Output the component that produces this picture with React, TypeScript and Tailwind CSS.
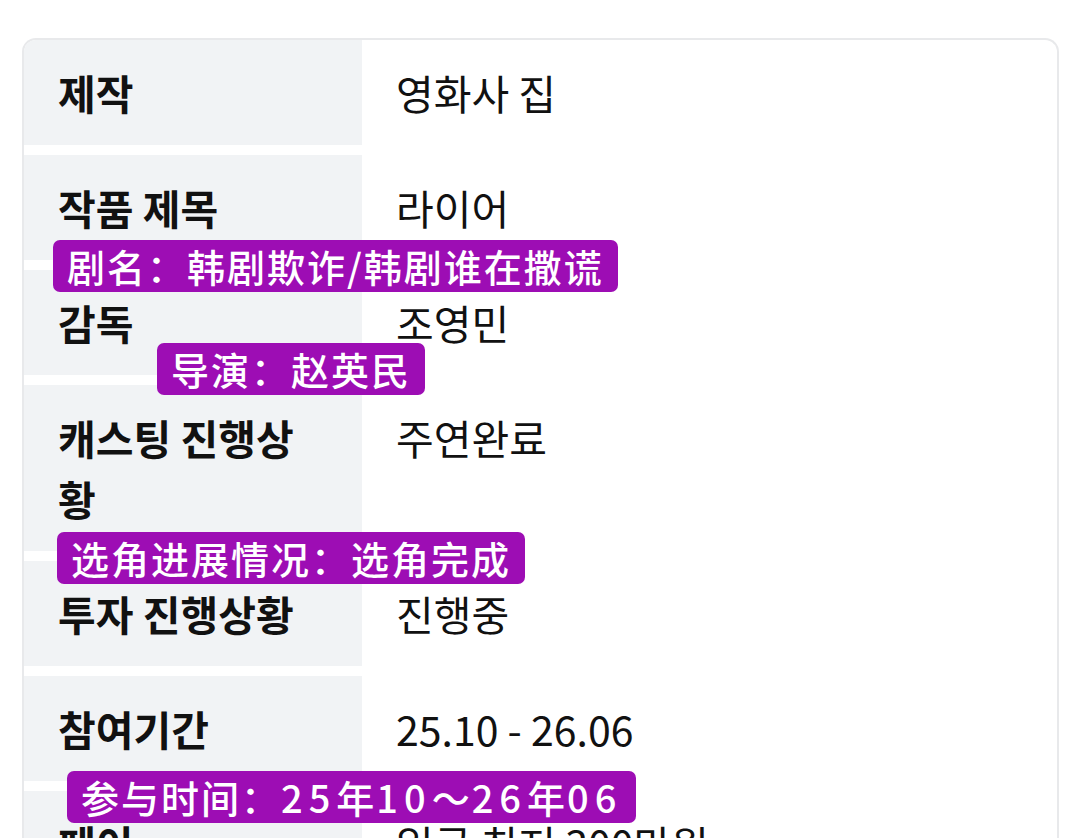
const rows = [
  { label: "제작", value: "영화사 집" },
  { label: "작품 제목", value: "라이어" },
  { label: "감독", value: "조영민" },
  { label: "캐스팅 진행상황", value: "주연완료" },
  { label: "투자 진행상황", value: "진행중" },
  { label: "참여기간", value: "25.10 - 26.06" },
  { label: "페이", value: "일급 최저 300만원" },
];

// translation captions laid over the table
const notes = [
  { text: "剧名：韩剧欺诈/韩剧谁在撒谎", pos: "left-[53px] top-[240px]" },
  { text: "导演：赵英民", pos: "left-[157px] top-[343px]" },
  { text: "选角进展情况：选角完成", pos: "left-[57px] top-[532px]" },
  { text: "参与时间：25年10～26年06", pos: "left-[67px] top-[771px]" },
];

function Caption({ text }: { text: string }) {
  // digits sit a little wider in the captions
  const parts = text.split(/(\d+)/);
  return (
    <>
      {parts.map((p, i) =>
        /^\d+$/.test(p) ? (
          <span key={i} className="tracking-[6px]">
            {p}
          </span>
        ) : (
          <span key={i}>{p}</span>
        )
      )}
    </>
  );
}

export default function App() {
  return (
    <div
      className="relative h-[838px] w-[1080px] overflow-hidden bg-white pt-[38px] pl-[22px] pr-[21px]"
      style={{ fontFamily: '"Noto Sans CJK KR", "Noto Sans", sans-serif' }}
    >
      <div className="overflow-hidden rounded-t-[14px] border-2 border-b-0 border-[#e8e9eb] bg-white">
        <div className="flex flex-col gap-[10px]">
          {rows.map((row) => (
            <div key={row.label} className="flex text-[41px] leading-[61px] text-[#111]">
              <div className="w-[338px] shrink-0 bg-[#f1f3f5] px-[34px] py-[22px] font-bold">
                {row.label}
              </div>
              <div className="flex-1 px-[34px] py-[22px]">{row.value}</div>
            </div>
          ))}
        </div>
      </div>

      {notes.map((n) => (
        <div
          key={n.text}
          className={`absolute ${n.pos} h-[52px] rounded-[7px] bg-[#9d0db4] px-[14px] text-[38px] font-medium leading-[52px] tracking-[2px] whitespace-nowrap text-white`}
          style={{ fontFamily: '"Noto Sans CJK SC", "Noto Sans", sans-serif' }}
        >
          <Caption text={n.text} />
        </div>
      ))}
    </div>
  );
}
